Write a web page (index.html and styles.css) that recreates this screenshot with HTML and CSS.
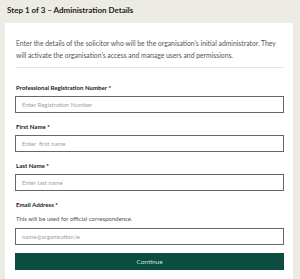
FILE: index.html
```html
<!DOCTYPE html>
<html lang="en">
<head>
<meta charset="utf-8">
<link rel="stylesheet" href="styles.css">
</head>
<body>
<div class="page">
  <h1 class="title">Step 1 of 3 – Administration Details</h1>
  <div class="card">
    <p class="intro">Enter the details of the solicitor who will be the organisation’s initial administrator. They will activate the organisation’s access and manage users and permissions.</p>
    <form class="form">
      <div class="field">
        <label class="label">Professional Registration Number *</label>
        <input class="input" type="text" placeholder="Enter Registration Number">
      </div>
      <div class="field">
        <label class="label">First Name *</label>
        <input class="input" type="text" placeholder="Enter  first name">
      </div>
      <div class="field">
        <label class="label">Last Name *</label>
        <input class="input" type="text" placeholder="Enter last name">
      </div>
      <div class="field">
        <label class="label">Email Address *</label>
        <div class="help">This will be used for official correspondence.</div>
        <input class="input" type="text" placeholder="name@organisation.ie">
      </div>
      <button class="button" type="button">Continue</button>
    </form>
  </div>
</div>
</body>
</html>
```

FILE: styles.css
```css
html, body {
  margin: 0;
  padding: 0;
  background: #ecebe4;
  font-family: Lato, "Open Sans", sans-serif;
  height: 100%;
}
.page {
  width: 300px;
  height: 279px;
  overflow: hidden;
}
.title {
  margin: 0;
  padding: 4px 0 0 7px;
  height: 19px;
  font-size: 8px;
  line-height: 12px;
  font-weight: 700;
  color: #222;
}
.card {
  margin-left: 5px;
  width: 288px;
  box-sizing: border-box;
  background: #fff;
  padding: 14px 9px 20px 10px;
  min-height: 260px;
}
.intro {
  margin: 0 0 0 1px;
  padding-bottom: 6px;
  border-bottom: 1px solid #e6e6e6;
  font-size: 6.8px;
  line-height: 12px;
  color: #555;
}
.form {
  display: flex;
  flex-direction: column;
  padding-top: 16px;
}
.field {
  display: flex;
  flex-direction: column;
  margin-bottom: 10px;
}
.label {
  font-size: 6.1px;
  line-height: 8px;
  font-weight: 700;
  color: #222;
  margin: 0 0 4px 1px;
}
.help {
  font-size: 6px;
  line-height: 8px;
  color: #555;
  margin: 2px 0 5px 1px;
}
.input {
  box-sizing: border-box;
  height: 17px;
  width: 100%;
  margin: 0;
  border: 1.5px solid #666;
  border-radius: 0;
  padding: 0 6px;
  font-family: Lato, sans-serif;
  font-size: 6px;
  color: #333;
  background: #fff;
}
.input::placeholder {
  color: #a0a0a0;
}
.button {
  box-sizing: border-box;
  height: 17px;
  width: 100%;
  margin-top: -2px;
  border: 0;
  background: #0b4d40;
  color: #d4dfdb;
  font-family: Lato, sans-serif;
  font-size: 6.5px;
  padding: 0;
}
```
